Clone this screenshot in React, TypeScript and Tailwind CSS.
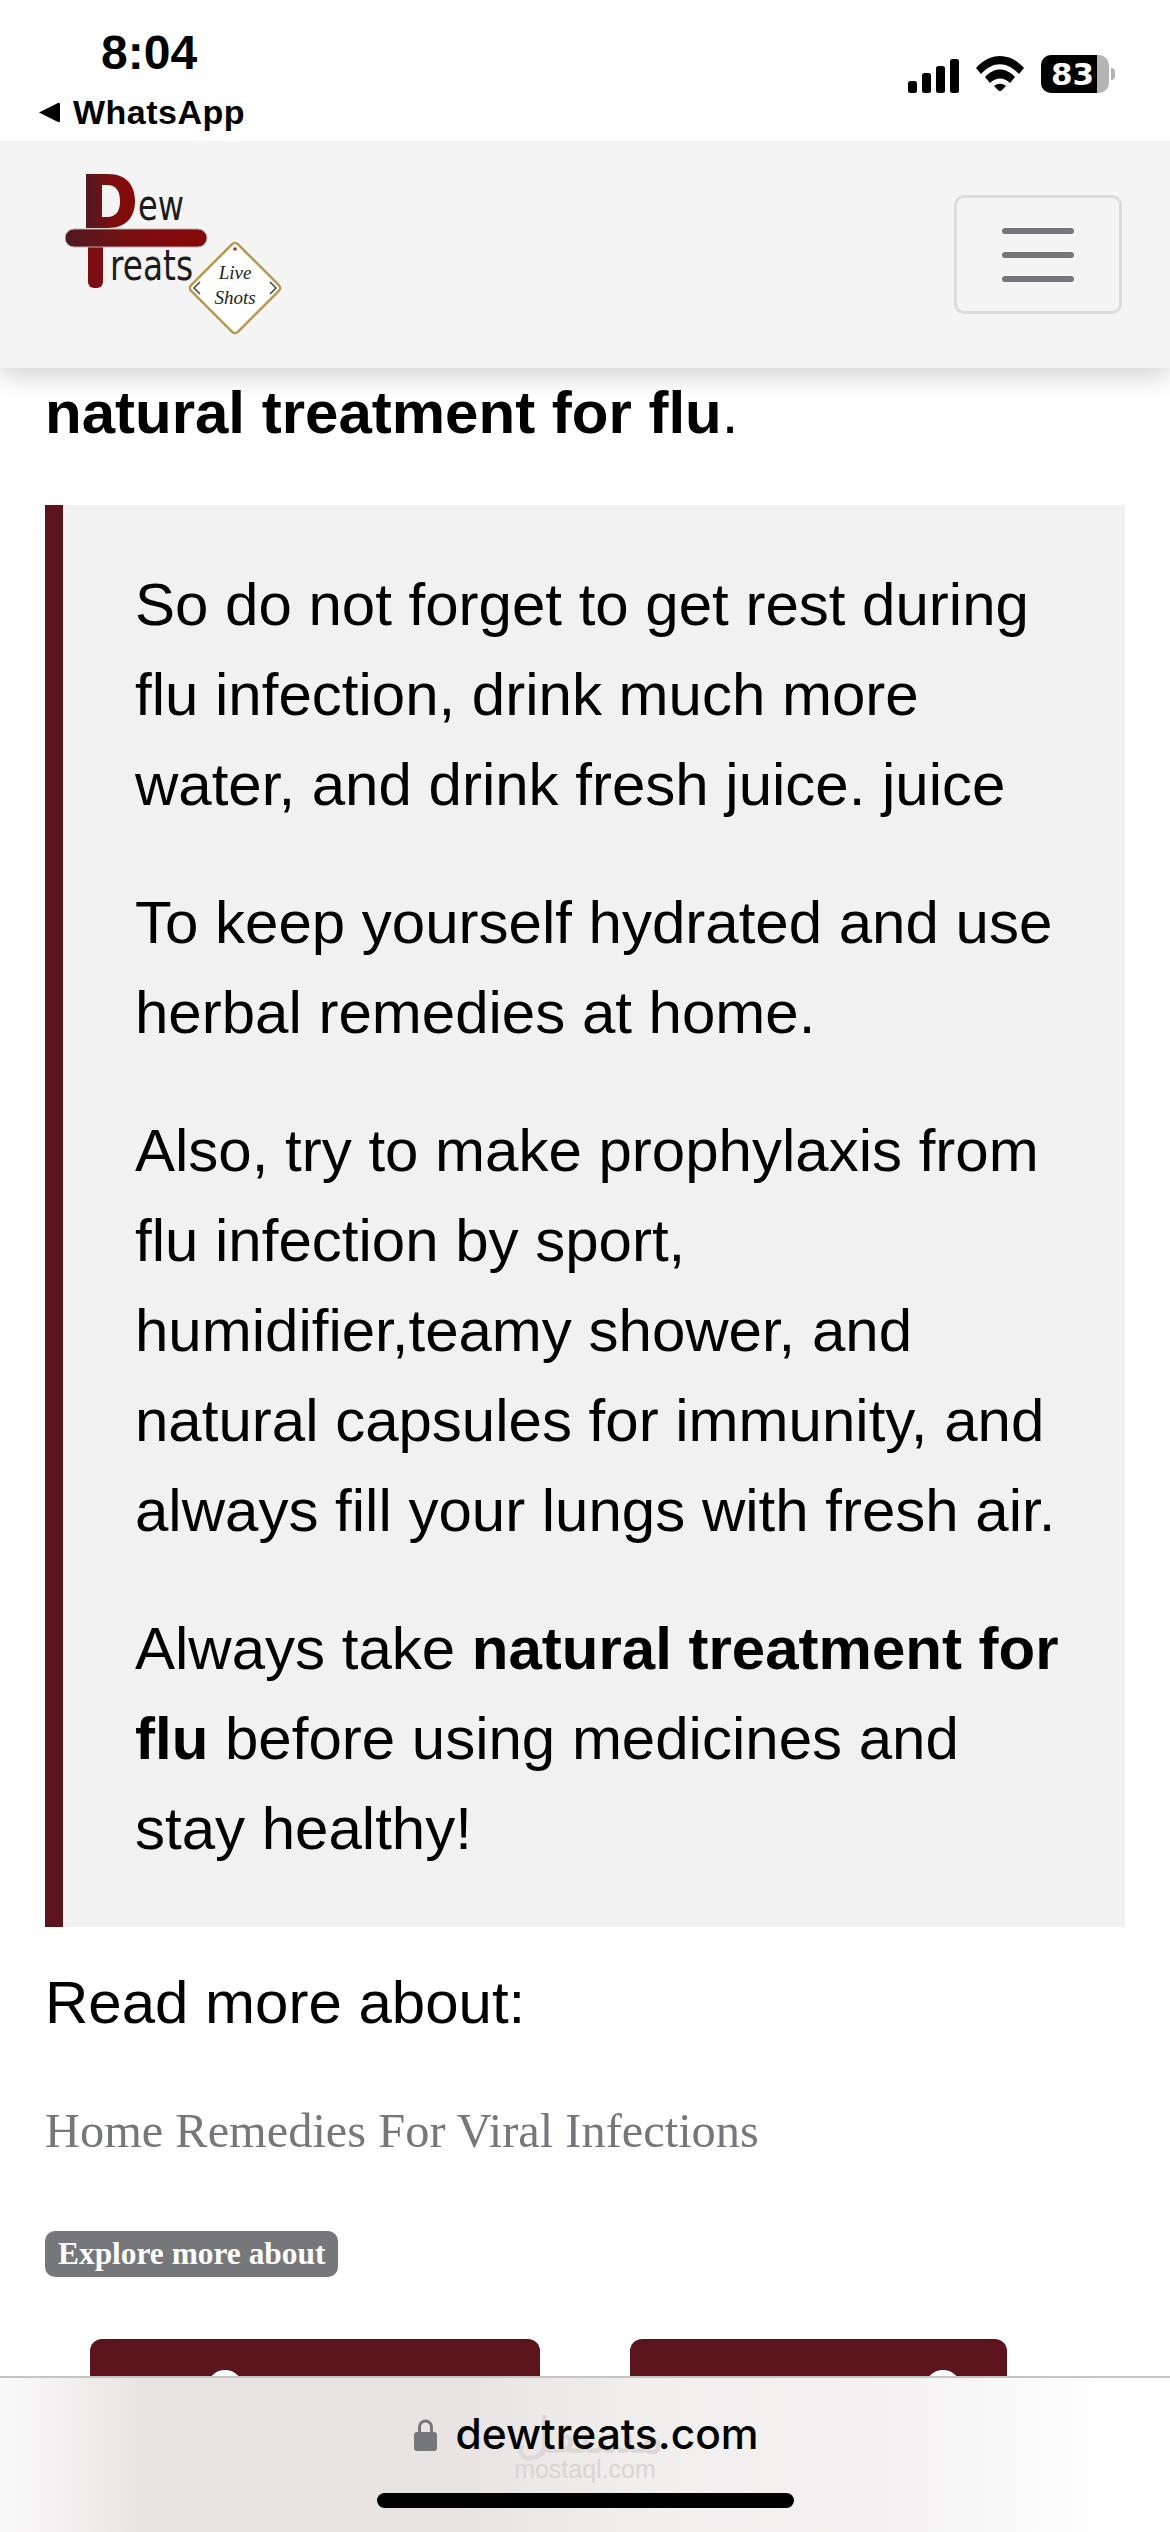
const sans = "font-['Liberation_Sans',Arial,sans-serif]";

function Logo() {
  return (
    <svg width="170" height="125" viewBox="0 0 170 125" className="shrink-0">
      <defs>
        <linearGradient id="dewRed" x1="0" x2="1" y1="0" y2="0">
          <stop offset="0" stopColor="#4f1a20" />
          <stop offset="0.5" stopColor="#7c0d0f" />
          <stop offset="1" stopColor="#860908" />
        </linearGradient>
      </defs>
      {/* D */}
      <path d="M21 3h22c18 0 27 11 27 27s-9 27-27 27H21zM37 14v32h5c10 0 13-7 13-16s-3-16-13-16z" fill="url(#dewRed)" fillRule="evenodd" />
      {/* cross bar and stem */}
      <path d="M23 70h15v41a6 6 0 0 1-6 6h-3a6 6 0 0 1-6-6z" fill="#7a0e12" />
      <rect x="0" y="58" width="142" height="18" rx="9" fill="url(#dewRed)" stroke="#b9b2b2" strokeWidth="1" />
      <text x="73" y="49" fontSize="42" fontFamily="'DejaVu Sans', sans-serif" fill="#1b1b1b" textLength="46" lengthAdjust="spacingAndGlyphs">ew</text>
      <text x="45" y="109" fontSize="42" fontFamily="'DejaVu Sans', sans-serif" fill="#1b1b1b" textLength="83" lengthAdjust="spacingAndGlyphs">reats</text>
    </svg>
  );
}

function LiveShots() {
  return (
    <svg width="100" height="100" viewBox="0 0 100 100" className="shrink-0">
      <rect x="17" y="17" width="66" height="66" rx="4" transform="rotate(45 50 50)" fill="#ffffff" stroke="#b59a4e" strokeWidth="2.5" />
      <circle cx="50" cy="11" r="1.8" fill="#a3301a" />
      <path d="M15 44l-6 6 6 6M85 44l6 6-6 6" fill="none" stroke="#444" strokeWidth="1.5" />
      <text x="50" y="41" textAnchor="middle" fontSize="19" fontStyle="italic" fontFamily="'Liberation Serif', serif" fill="#222">Live</text>
      <text x="50" y="66" textAnchor="middle" fontSize="19" fontStyle="italic" fontFamily="'Liberation Serif', serif" fill="#222">Shots</text>
    </svg>
  );
}

function StatusBar() {
  return (
    <div className={`relative z-20 h-[141px] bg-white flex justify-between ${sans}`}>
      <div className="pl-[39px] pt-[25px]">
        <div className="pl-[62px] text-[48px] leading-[55px] font-bold text-black">8:04</div>
        <div className="flex items-center mt-[13px] gap-[13px]">
          <svg width="21" height="21" viewBox="0 0 21 21"><path d="M0 10.5L19 1a1.5 1.5 0 0 1 2 1v17a1.5 1.5 0 0 1-2 1z" fill="#000" /></svg>
          <span className="text-[34px] leading-[38px] font-bold tracking-[0.5px] text-black">WhatsApp</span>
        </div>
      </div>
      <div className="flex items-start pt-[55px] pr-[55px] gap-[17px]">
        <svg width="51" height="36" viewBox="0 0 51 36" className="mt-[2px]">
          <rect x="0" y="24" width="9" height="12" rx="2.5" />
          <rect x="14" y="16" width="9" height="20" rx="2.5" />
          <rect x="28" y="9" width="9" height="27" rx="2.5" />
          <rect x="42" y="2" width="9" height="34" rx="2.5" />
        </svg>
        <svg width="48" height="36" viewBox="0 0 48 36">
          <path d="M0 13C14 -3 34 -3 48 13l-5 6C31 6 17 6 5 19z" />
          <path d="M9 22c9-10 21-10 30 0l-5 6c-6-6-14-6-20 0z" />
          <path d="M18 31c4-3 8-3 12 0l-6 6z" />
        </svg>
        <div className="flex items-center">
          <div className="relative w-[68px] h-[38px] rounded-[10px] bg-[#b4b4b4] overflow-hidden">
            <div className="h-full w-[56px] bg-black overflow-hidden flex items-center pl-[10px]">
              <span className="text-[31px] leading-none font-bold text-white font-['DejaVu_Sans',sans-serif]">83</span>
            </div>
          </div>
          <div className="w-[4px] h-[12px] ml-[2px] rounded-r-full bg-[#b4b4b4]" />
        </div>
      </div>
    </div>
  );
}

function Navbar() {
  return (
    <nav className="relative z-10 h-[227px] bg-[#f4f4f4] shadow-[0_8px_24px_rgba(0,0,0,0.18)] flex justify-between pr-[48px]">
      <div className="relative pl-[65px] pt-[30px]">
        <Logo />
        <div className="absolute left-[185px] top-[97px]">
          <LiveShots />
        </div>
      </div>
      <button className="mt-[54px] w-[168px] h-[119px] border-[3px] border-[#dcdcdc] rounded-[10px] flex flex-col items-center justify-center gap-[18px]">
        <span className="block w-[72px] h-[6px] rounded-full bg-[#75777a]" />
        <span className="block w-[72px] h-[6px] rounded-full bg-[#75777a]" />
        <span className="block w-[72px] h-[6px] rounded-full bg-[#75777a]" />
      </button>
    </nav>
  );
}

function CardHead({ width, dot }: { width: string; dot: string }) {
  return (
    <div className={`relative h-[120px] bg-[#5c141d] rounded-t-[12px] ${width}`}>
      <div className={`absolute top-[31px] w-[36px] h-[36px] rounded-full border-[6px] border-white ${dot}`} />
    </div>
  );
}

export default function App() {
  return (
    <div className={`relative w-[1170px] h-[2532px] overflow-hidden bg-white text-black ${sans}`}>
      <StatusBar />
      <Navbar />
      <main className="px-[45px]">
        <p className="text-[60px] leading-[90px] mb-[47px]">
          <strong>natural treatment for flu</strong>.
        </p>
        <blockquote className="border-l-[18px] border-[#5c141d] bg-[#f1f1f1] pl-[72px] pr-[60px] pt-[55px] pb-[53px] text-[60px] leading-[90px]">
          <p className="mb-[48px]">So do not forget to get rest during flu infection, drink much more water, and drink fresh juice. juice</p>
          <p className="mb-[48px]">To keep yourself hydrated and use herbal remedies at home.</p>
          <p className="mb-[48px]">Also, try to make prophylaxis from flu infection by sport, humidifier,teamy shower, and natural capsules for immunity, and always fill your lungs with fresh air.</p>
          <p>Always take <strong>natural treatment for flu</strong> before using medicines and stay healthy!</p>
        </blockquote>
        <p className="mt-[31px] text-[60px] leading-[90px]">Read more about:</p>
        <a className="block mt-[47px] text-[48.4px] leading-[72px] text-[#75777a] font-['Liberation_Serif',serif]">Home Remedies For Viral Infections</a>
        <span className="mt-[64px] inline-flex items-center h-[46px] px-[13px] rounded-[10px] bg-[#75777a] text-white font-bold text-[31.4px] font-['Liberation_Serif',serif]">Explore more about</span>
        <div className="flex mt-[62px] ml-[45px] gap-[90px]">
          <CardHead width="w-[450px]" dot="left-[117px]" />
          <CardHead width="w-[377px]" dot="right-[46px]" />
        </div>
      </main>
      {/* browser url bar */}
      <div className="absolute left-0 right-0 bottom-0 h-[156px] border-t-2 border-[#c4c4c4] bg-[linear-gradient(90deg,#fbfafa_0%,#e8e4e4_12%,#e8e4e4_40%,#f1eeee_55%,#f3f1f1_75%,#ffffff_95%)] flex flex-col items-center">
        <span className="absolute top-[30px] left-[515px] w-[141px] text-center text-[50px] leading-[56px] text-[#dcd8d8] font-['DejaVu_Sans',sans-serif]">مستقل</span>
        <div className="relative mt-[31px] flex items-center gap-[18px] pl-[3px]">
          <svg width="23" height="33" viewBox="0 0 23 33" fill="#75777a">
            <path d="M4 15V9a7.5 7.5 0 0 1 15 0v6h-3V9a4.5 4.5 0 0 0-9 0v6z" />
            <rect x="0" y="14" width="23" height="19" rx="3" />
          </svg>
          <span className="text-[42.5px] leading-[50px] font-medium text-black font-['Inter',sans-serif]">dewtreats.com</span>
        </div>
        <span className="relative mt-[-4px] text-[25px] leading-[28px] text-[#d8d4d4]">mostaql.com</span>
        <div className="relative mt-[10px] w-[417px] h-[15px] rounded-full bg-black" />
      </div>
    </div>
  );
}
